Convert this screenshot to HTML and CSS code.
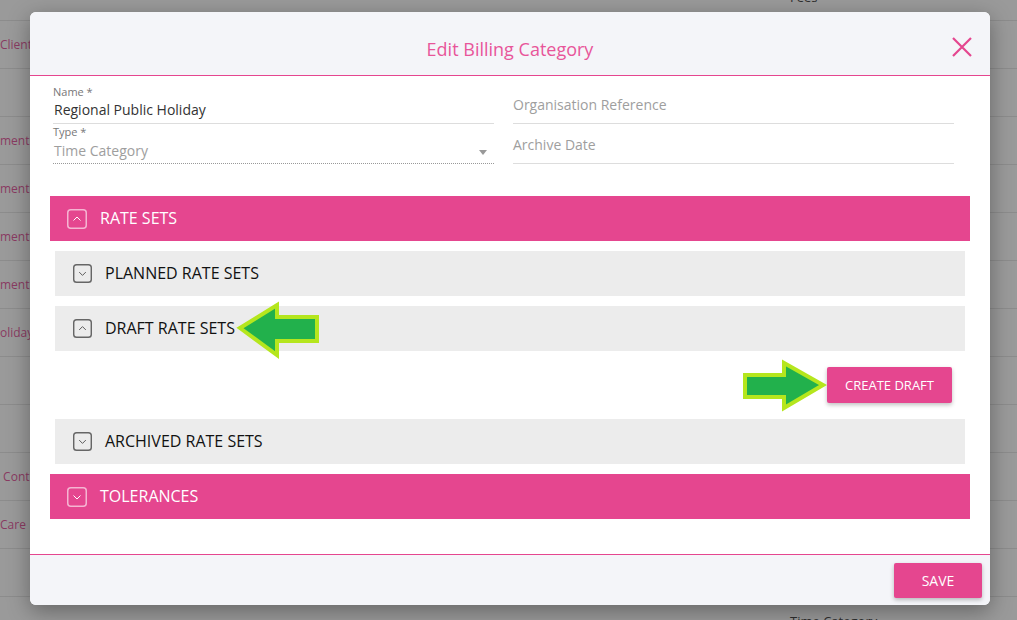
FILE: index.html
```html
<!DOCTYPE html>
<html lang="en">
<head>
    <meta charset="UTF-8">
    <meta name="viewport" content="width=device-width, initial-scale=1.0">
    <title>Edit Billing Category</title>
    <link rel="stylesheet" href="styles.css">
</head>
<body>
    <!-- Arka plandaki liste -->
    <div class="page">
        <div class="row"><span></span><span class="dark">Fees</span></div>
        <div class="row"><span>Client</span><span></span></div>
        <div class="row"><span></span><span></span></div>
        <div class="row"><span>ment</span><span></span></div>
        <div class="row"><span>ment</span><span></span></div>
        <div class="row"><span>ment</span><span></span></div>
        <div class="row"><span>ment</span><span></span></div>
        <div class="row"><span>oliday</span><span></span></div>
        <div class="row"><span></span><span></span></div>
        <div class="row"><span></span><span></span></div>
        <div class="row"><span>&nbsp;Cont</span><span></span></div>
        <div class="row"><span>Care</span><span></span></div>
        <div class="row"><span></span><span></span></div>
        <div class="row"><span></span><span class="dark">Time Category</span></div>
    </div>

    <div class="modal">
        <div class="modal-header">
            <h2>Edit Billing Category</h2>
            <button class="close" type="button">
                <svg width="20" height="20" viewBox="0 0 20 20"><path d="M1 1L19 19M19 1L1 19" stroke="#e5468f" stroke-width="2.2" fill="none"/></svg>
            </button>
        </div>

        <div class="modal-body">
            <div class="fields">
                <div class="col">
                    <div class="field">
                        <label>Name *</label>
                        <div class="value">Regional Public Holiday</div>
                    </div>
                    <div class="field select">
                        <label>Type *</label>
                        <div class="value muted">Time Category</div>
                        <span class="caret"></span>
                    </div>
                </div>
                <div class="col">
                    <div class="field empty"><div class="value muted">Organisation Reference</div></div>
                    <div class="field empty"><div class="value muted">Archive Date</div></div>
                </div>
            </div>

            <div class="panel">
                <div class="panel-head">
                    <svg class="toggle" width="20" height="20" viewBox="0 0 20 20"><rect x="0.75" y="0.75" width="18.5" height="18.5" rx="3" fill="none" stroke="rgba(255,255,255,0.6)" stroke-width="1.5"/><path d="M6.5 11.5L10 8L13.5 11.5" fill="none" stroke="#fff" stroke-width="1"/></svg>
                    <span>RATE SETS</span>
                </div>
                <div class="panel-body">
                    <div class="sub-row">
                        <svg class="toggle" width="20" height="20" viewBox="0 0 20 20"><rect x="0.75" y="0.75" width="18.5" height="18.5" rx="3" fill="none" stroke="#666" stroke-width="1.5"/><path d="M6.5 8.5L10 12L13.5 8.5" fill="none" stroke="#555" stroke-width="1"/></svg>
                        <span>PLANNED RATE SETS</span>
                    </div>
                    <div class="sub-row open">
                        <svg class="toggle" width="20" height="20" viewBox="0 0 20 20"><rect x="0.75" y="0.75" width="18.5" height="18.5" rx="3" fill="none" stroke="#666" stroke-width="1.5"/><path d="M6.5 11.5L10 8L13.5 11.5" fill="none" stroke="#555" stroke-width="1"/></svg>
                        <span>DRAFT RATE SETS</span>
                    </div>
                    <div class="draft-actions">
                        <button type="button" class="btn">CREATE DRAFT</button>
                    </div>
                    <div class="sub-row">
                        <svg class="toggle" width="20" height="20" viewBox="0 0 20 20"><rect x="0.75" y="0.75" width="18.5" height="18.5" rx="3" fill="none" stroke="#666" stroke-width="1.5"/><path d="M6.5 8.5L10 12L13.5 8.5" fill="none" stroke="#555" stroke-width="1"/></svg>
                        <span>ARCHIVED RATE SETS</span>
                    </div>
                </div>
                <div class="panel-head">
                    <svg class="toggle" width="20" height="20" viewBox="0 0 20 20"><rect x="0.75" y="0.75" width="18.5" height="18.5" rx="3" fill="none" stroke="rgba(255,255,255,0.6)" stroke-width="1.5"/><path d="M6.5 8.5L10 12L13.5 8.5" fill="none" stroke="#fff" stroke-width="1"/></svg>
                    <span>TOLERANCES</span>
                </div>
            </div>
        </div>

        <div class="modal-footer">
            <button type="button" class="btn save">SAVE</button>
        </div>
    </div>

    <!-- Yesil oklar (ekran goruntusu notlari) -->
    <svg class="arrows" width="1017" height="620" viewBox="0 0 1017 620">
        <polygon points="240,328 277,305 277,317 317,317 317,341 277,341 277,355" fill="#22b14c" stroke="#b5e61d" stroke-width="4" stroke-linejoin="miter"/>
        <polygon points="823,385 784,363 784,375 745,375 745,397 784,397 784,408" fill="#22b14c" stroke="#b5e61d" stroke-width="4" stroke-linejoin="miter"/>
    </svg>
</body>
</html>
```
FILE: styles.css
```css
html, body {
    margin: 0;
    padding: 0;
    height: 100%;
}
body {
    font-family: "Open Sans", Arial, sans-serif;
    background-color: #9a9a9a;
    position: relative;
    overflow: hidden;
}
.page {
    margin-top: -27px;
}
.row {
    display: grid;
    grid-template-columns: 790px 1fr;
    align-items: center;
    height: 48px;
    box-sizing: border-box;
    border-bottom: 1px solid #8c8c8c;
    font-size: 12px;
    color: #8a3b62;
}
.row .dark {
    color: #2e2e2e;
    font-size: 13px;
}
.modal {
    position: absolute;
    top: 12px;
    left: 30px;
    width: 960px;
    height: 593px;
    background: #fff;
    border-radius: 6px;
    overflow: hidden;
    display: flex;
    flex-direction: column;
    box-shadow: 0 6px 22px rgba(0, 0, 0, 0.35);
}
.modal-header {
    position: relative;
    height: 63px;
    flex-shrink: 0;
    background: #f4f5f9;
    border-bottom: 1px solid #e5468f;
    text-align: center;
}
.modal-header h2 {
    margin: 0;
    padding-top: 24px;
    font-size: 18px;
    line-height: 26px;
    font-weight: normal;
    color: #e8559a;
}
.close {
    position: absolute;
    top: 25px;
    right: 18px;
    padding: 0;
    border: none;
    background: none;
    width: 20px;
    height: 20px;
}
.close svg {
    display: block;
}
.modal-body {
    flex: 1;
    padding: 9px 20px 0 20px;
}
.fields {
    display: grid;
    grid-template-columns: 1fr 1fr;
    gap: 19px;
    margin: 0 16px 0 3px;
}
.col {
    display: flex;
    flex-direction: column;
    gap: 1px;
}
.field {
    position: relative;
    border-bottom: 1px solid #ddd;
}
.field label {
    display: block;
    font-size: 11px;
    line-height: 14px;
    color: #777;
}
.field .value {
    font-size: 14px;
    line-height: 20px;
    padding: 1px 0 3px 1px;
    color: #333;
}
.field .muted {
    color: #9e9e9e;
}
.field.empty .value {
    padding: 10px 0 8px 0;
}
.field.select {
    border-bottom: 1px dotted #999;
}
.field.select .value {
    padding: 2px 0 2px 1px;
}
.caret {
    position: absolute;
    right: 7px;
    top: 25px;
    border-left: 4px solid transparent;
    border-right: 4px solid transparent;
    border-top: 5px solid #999;
}
.panel {
    margin-top: 32px;
}
.panel-head {
    display: flex;
    align-items: center;
    gap: 13px;
    height: 45px;
    padding-left: 17px;
    background: #e5468f;
    color: #fff;
    font-size: 16px;
}
.panel-head span,
.sub-row span {
    margin-top: -2px;
}
.panel-body {
    padding: 10px 5px 0 5px;
}
.sub-row {
    display: flex;
    align-items: center;
    gap: 13px;
    height: 45px;
    padding-left: 18px;
    margin-bottom: 10px;
    background: #ececec;
    color: #111;
    font-size: 16px;
}
.sub-row.open {
    margin-bottom: 0;
}
.toggle {
    display: block;
    flex-shrink: 0;
}
.sub-row .toggle {
    width: 19px;
    height: 19px;
}
.draft-actions {
    display: flex;
    justify-content: flex-end;
    padding: 16px 13px;
}
.btn {
    background: #e5468f;
    color: #fff;
    border: none;
    border-radius: 2px;
    font-family: "Open Sans", Arial, sans-serif;
    font-size: 13px;
    height: 36px;
    width: 125px;
    padding: 0;
    box-shadow: 0 2px 4px rgba(0, 0, 0, 0.25);
    cursor: pointer;
}
.modal-footer {
    height: 42px;
    flex-shrink: 0;
    background: #f4f5f9;
    border-top: 1px solid #e5468f;
    display: flex;
    justify-content: flex-end;
    align-items: flex-start;
    padding: 8px 8px 0 0;
}
.btn.save {
    width: 88px;
    height: 35px;
    font-size: 14px;
}
.arrows {
    position: absolute;
    top: 0;
    left: 0;
    pointer-events: none;
}
```
